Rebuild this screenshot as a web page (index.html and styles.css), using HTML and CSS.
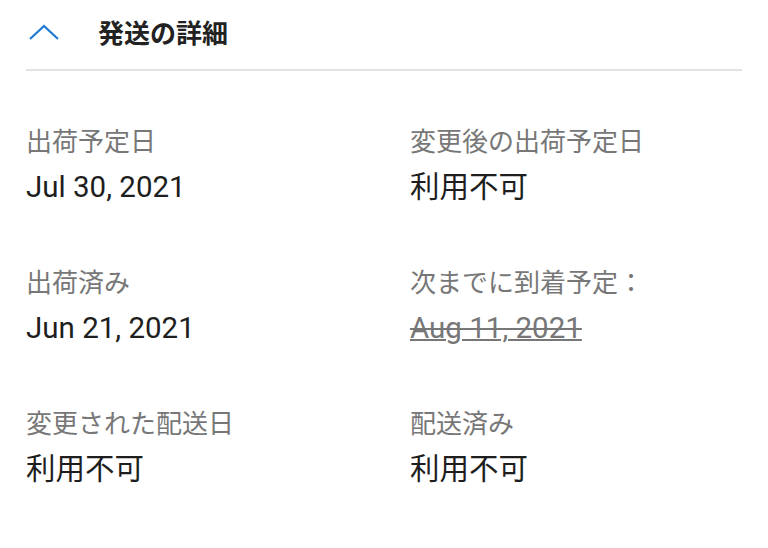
FILE: index.html
```html
<!DOCTYPE html>
<html lang="ja">

<head>
  <meta charset="utf-8">
  <title>発送の詳細</title>
  <link rel="stylesheet" href="styles.css">
</head>

<body>
  <section class="shipping">
    <!-- Collapsible header -->
    <div class="shipping-header">
      <button class="toggle" aria-label="閉じる">
        <svg width="32" height="18" viewBox="0 0 32 18">
          <polyline points="2,16 16,3 30,16" fill="none" stroke="#1f7ad4" stroke-width="2.2" />
        </svg>
      </button>
      <h2 class="shipping-title">発送の詳細</h2>
    </div>

    <div class="details">
      <div class="item">
        <div class="label">出荷予定日</div>
        <div class="value">Jul 30, 2021</div>
      </div>
      <div class="item">
        <div class="label">変更後の出荷予定日</div>
        <div class="value">利用不可</div>
      </div>
      <div class="item">
        <div class="label">出荷済み</div>
        <div class="value">Jun 21, 2021</div>
      </div>
      <div class="item">
        <div class="label">次までに到着予定：</div>
        <div class="value"><a class="old-date" href="#">Aug 11, 2021</a></div>
      </div>
      <div class="item">
        <div class="label">変更された配送日</div>
        <div class="value">利用不可</div>
      </div>
      <div class="item">
        <div class="label">配送済み</div>
        <div class="value">利用不可</div>
      </div>
    </div>
  </section>
</body>

</html>
```

FILE: styles.css
```css
body {
  margin: 0;
  background-color: #fff;
  font-family: Roboto, "Noto Sans CJK JP", sans-serif;
  color: #212121;
}

.shipping {
  padding: 0 26px;
}

/* Header with chevron and title */
.shipping-header {
  display: flex;
  align-items: center;
  height: 69px;
  border-bottom: 2px solid #e3e3e3;
}

.toggle {
  display: flex;
  align-items: center;
  background: none;
  border: none;
  padding: 0 0 6px 2px;
  margin-right: 38px;
  cursor: pointer;
}

.shipping-title {
  margin: 0 0 6px;
  font-size: 26px;
  font-weight: bold;
  color: #222;
}

/* Two-column detail grid */
.details {
  display: grid;
  grid-template-columns: 384px 1fr;
  row-gap: 58px;
  padding-top: 53px;
}

.label {
  font-size: 26px;
  line-height: 36px;
  color: #777;
}

.value {
  margin-top: 7px;
  font-size: 29.5px;
  line-height: 40px;
  color: #1e1e1e;
}

.old-date {
  color: #777;
  text-decoration: underline line-through;
  text-decoration-thickness: 2px;
}
```
